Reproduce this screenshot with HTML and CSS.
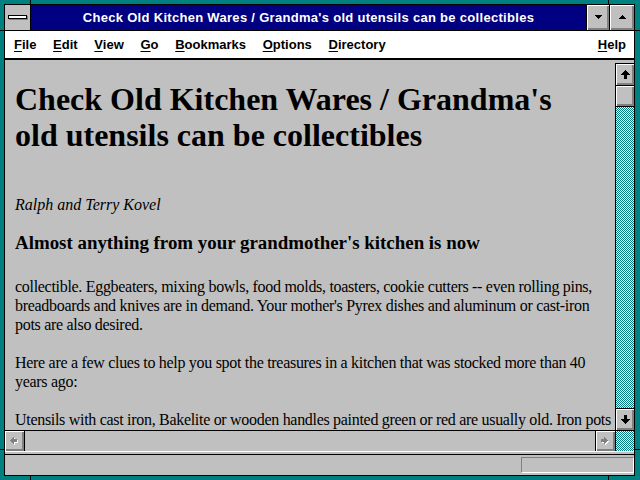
FILE: index.html
```html
<!DOCTYPE html>
<html>
<head>
<meta charset="utf-8">
<title>Check Old Kitchen Wares</title>
<link rel="stylesheet" href="styles.css">
</head>
<body>
<div class="window">
  <div class="frame">
    <div class="titlebar">
      <div class="sysmenu"><span class="sysbar"></span></div>
      <div class="title">Check Old Kitchen Wares / Grandma's old utensils can be collectibles</div>
      <div class="tbtn min">
        <svg width="7" height="4" viewBox="0 0 7 4" shape-rendering="crispEdges"><polygon points="0,0 7,0 7,1 6,1 6,2 5,2 5,3 4,3 4,4 3,4 3,3 2,3 2,2 1,2 1,1 0,1" fill="#000"/></svg>
      </div>
      <div class="tbtn max">
        <svg width="7" height="4" viewBox="0 0 7 4" shape-rendering="crispEdges"><polygon points="3,0 4,0 4,1 5,1 5,2 6,2 6,3 7,3 7,4 0,4 0,3 1,3 1,2 2,2 2,1 3,1" fill="#000"/></svg>
      </div>
    </div>
    <div class="menubar">
      <span class="mi"><u>F</u>ile</span>
      <span class="mi"><u>E</u>dit</span>
      <span class="mi"><u>V</u>iew</span>
      <span class="mi"><u>G</u>o</span>
      <span class="mi"><u>B</u>ookmarks</span>
      <span class="mi"><u>O</u>ptions</span>
      <span class="mi"><u>D</u>irectory</span>
      <span class="mi help"><u>H</u>elp</span>
    </div>
    <div class="band"></div>
    <div class="docrow">
      <div class="doc">
        <h1>Check Old Kitchen Wares / Grandma's old utensils can be collectibles</h1>
        <p class="author">Ralph and Terry Kovel</p>
        <h3>Almost anything from your grandmother's kitchen is now</h3>
        <p>collectible. Eggbeaters, mixing bowls, food molds, toasters, cookie cutters -- even rolling pins, breadboards and knives are in demand. Your mother's Pyrex dishes and aluminum or cast-iron pots are also desired.</p>
        <p>Here are a few clues to help you spot the treasures in a kitchen that was stocked more than 40 years ago:</p>
        <p>Utensils with cast iron, Bakelite or wooden handles painted green or red are usually old. Iron pots</p>
      </div>
      <div class="vscroll">
        <div class="sbtn up">
          <svg width="9" height="9" viewBox="0 0 9 9" shape-rendering="crispEdges"><polygon points="4,0 5,0 5,1 6,1 6,2 7,2 7,3 8,3 8,4 9,4 9,5 6,5 6,9 3,9 3,5 0,5 0,4 1,4 1,3 2,3 2,2 3,2 3,1 4,1" fill="#000"/></svg>
        </div>
        <div class="thumb"></div>
        <div class="track"></div>
        <div class="sbtn down">
          <svg width="9" height="9" viewBox="0 0 9 9" shape-rendering="crispEdges"><polygon points="3,0 6,0 6,4 9,4 9,5 8,5 8,6 7,6 7,7 6,7 6,8 5,8 5,9 4,9 4,8 3,8 3,7 2,7 2,6 1,6 1,5 0,5 0,4 3,4" fill="#000"/></svg>
        </div>
      </div>
    </div>
    <div class="hscroll">
      <div class="hbtn left">
        <svg width="9" height="9" viewBox="0 0 9 9" shape-rendering="crispEdges">
          <polygon transform="translate(1,1)" points="0,3 1,3 1,2 2,2 2,1 3,1 3,0 4,0 4,2 7,2 7,5 4,5 4,7 3,7 3,6 2,6 2,5 1,5 1,4 0,4" fill="#fff"/>
          <polygon points="0,3 1,3 1,2 2,2 2,1 3,1 3,0 4,0 4,2 7,2 7,5 4,5 4,7 3,7 3,6 2,6 2,5 1,5 1,4 0,4" fill="#808080"/>
        </svg>
      </div>
      <div class="htrack"></div>
      <div class="hbtn right">
        <svg width="9" height="9" viewBox="0 0 9 9" shape-rendering="crispEdges">
          <polygon transform="translate(1,1)" points="7,3 6,3 6,2 5,2 5,1 4,1 4,0 3,0 3,2 0,2 0,5 3,5 3,7 4,7 4,6 5,6 5,5 6,5 6,4 7,4" fill="#fff"/>
          <polygon points="7,3 6,3 6,2 5,2 5,1 4,1 4,0 3,0 3,2 0,2 0,5 3,5 3,7 4,7 4,6 5,6 5,5 6,5 6,4 7,4" fill="#808080"/>
        </svg>
      </div>
      <div class="corner"></div>
    </div>
    <div class="band2"></div>
    <div class="status"><div class="statbox"></div></div>
  </div>
</div>
</body>
</html>
```
FILE: styles.css
```css
html, body {
  margin: 0;
  padding: 0;
  background: #008080;
}

.window {
  width: 640px;
  height: 480px;
  box-sizing: border-box;
  padding: 4px 5px 4px 4px;
  background-color: #008080;
  background-image:
    linear-gradient(#000, #000),
    linear-gradient(#000, #000),
    linear-gradient(#000, #000),
    linear-gradient(#000, #000),
    linear-gradient(#000, #000),
    linear-gradient(#000, #000),
    linear-gradient(#000, #000),
    linear-gradient(#000, #000);
  background-repeat: no-repeat;
  background-size:
    1px 4px, 1px 4px, 1px 4px, 1px 4px,
    4px 1px, 4px 1px, 5px 1px, 5px 1px;
  background-position:
    30px 0, 608px 0, 30px 476px, 608px 476px,
    0 30px, 0 449px, 635px 30px, 635px 449px;
}

.frame {
  height: 100%;
  box-sizing: border-box;
  border: 1px solid #000;
  background: #c0c0c0;
  display: flex;
  flex-direction: column;
}

/* Title bar */
.titlebar {
  height: 25px;
  flex: none;
  display: flex;
  border-bottom: 1px solid #000;
}

.sysmenu {
  width: 25px;
  border-right: 1px solid #000;
  background: #c0c0c0;
  display: flex;
  align-items: center;
  justify-content: center;
}

.sysbar {
  display: block;
  width: 17px;
  height: 2px;
  background: #fff;
  border: 1px solid #000;
  box-shadow: 1px 1px 0 #808080;
  margin-top: -1px;
}

.title {
  flex: 1;
  background: #000080;
  color: #fff;
  font-family: "Liberation Sans", Arial, sans-serif;
  font-weight: bold;
  font-size: 13px;
  letter-spacing: 0.3px;
  line-height: 25px;
  text-align: center;
  white-space: nowrap;
  overflow: hidden;
}

.tbtn {
  border-left: 1px solid #000;
  background: #c0c0c0;
  box-shadow: inset 1px 1px 0 #fff, inset -1px -1px 0 #808080, inset -2px -2px 0 #808080;
  display: flex;
  align-items: center;
  justify-content: center;
}

.tbtn.min { width: 22px; }
.tbtn.max { width: 24px; }
.tbtn svg { display: block; margin-top: -2px; }

/* Menu bar */
.menubar {
  height: 27px;
  flex: none;
  background: #fff;
  border-bottom: 1px solid #000;
  display: flex;
  gap: 16.7px;
  padding: 0 8px 0 9px;
  font-family: "Liberation Sans", Arial, sans-serif;
  font-weight: bold;
  font-size: 13px;
  line-height: 27px;
  color: #000;
  white-space: nowrap;
}

.mi u {
  text-decoration: underline;
  text-underline-offset: 2px;
  text-decoration-thickness: 1px;
}

.mi.help { margin-left: auto; }

.band {
  height: 3px;
  flex: none;
  border-top: 1px solid #000;
  background: #c0c0c0;
}

/* Document area */
.docrow {
  flex: 1;
  display: flex;
  min-height: 0;
}

.doc {
  flex: 1;
  overflow: hidden;
  padding: 0 0 0 10px;
  font-family: "Liberation Serif", "Times New Roman", serif;
  color: #000;
  background: #c0c0c0;
}

.doc h1 {
  font-size: 32px;
  line-height: 36px;
  font-weight: bold;
  margin: 18px 0 42px;
  padding-right: 14px;
}

.doc h3 {
  font-size: 18.9px;
  line-height: 22px;
  font-weight: bold;
  margin: 0 0 23px;
}

.doc p {
  font-size: 16px;
  line-height: 19px;
  letter-spacing: -0.3px;
  margin: 0 0 19px;
}

.doc p.author {
  font-style: italic;
  letter-spacing: 0;
  margin: 0 0 18px;
}

/* Vertical scrollbar */
.vscroll {
  width: 18px;
  flex: none;
  border-left: 1px solid #000;
  border-top: 1px solid #000;
  display: flex;
  flex-direction: column;
}

.sbtn, .hbtn, .thumb {
  background: #c0c0c0;
  box-shadow: inset 1px 1px 0 #fff, inset -1px -1px 0 #808080, inset -2px -2px 0 #808080;
  display: flex;
  align-items: center;
  justify-content: center;
}

.sbtn {
  height: 21px;
  flex: none;
}

.sbtn.up { border-bottom: 1px solid #000; }
.sbtn.down { border-top: 1px solid #000; }

.thumb {
  height: 20px;
  flex: none;
  border-bottom: 1px solid #000;
}

.track, .corner {
  background: repeating-conic-gradient(#008080 0% 25%, #ffffff 0% 50%) 0 0 / 2px 2px;
}

.track { flex: 1; }

/* Horizontal scrollbar */
.hscroll {
  height: 20px;
  flex: none;
  border-top: 1px solid #000;
  display: flex;
}

.hbtn { width: 19px; flex: none; }
.hbtn.left { border-right: 1px solid #000; }
.hbtn.right { border-left: 1px solid #000; }

.htrack {
  flex: 1;
  background: #c0c0c0;
}

.corner {
  width: 18px;
  flex: none;
  border-left: 1px solid #000;
}

/* Status bar */
.band2 {
  height: 2px;
  flex: none;
  border-top: 1px solid #fff;
  border-bottom: 1px solid #000;
  background: #c0c0c0;
}

.status {
  height: 20px;
  flex: none;
  display: flex;
  justify-content: flex-end;
  align-items: center;
  background: #c0c0c0;
}

.statbox {
  width: 111px;
  height: 14px;
  border-top: 1px solid #808080;
  border-left: 1px solid #808080;
  border-bottom: 1px solid #fff;
  border-right: 1px solid #fff;
}
```
